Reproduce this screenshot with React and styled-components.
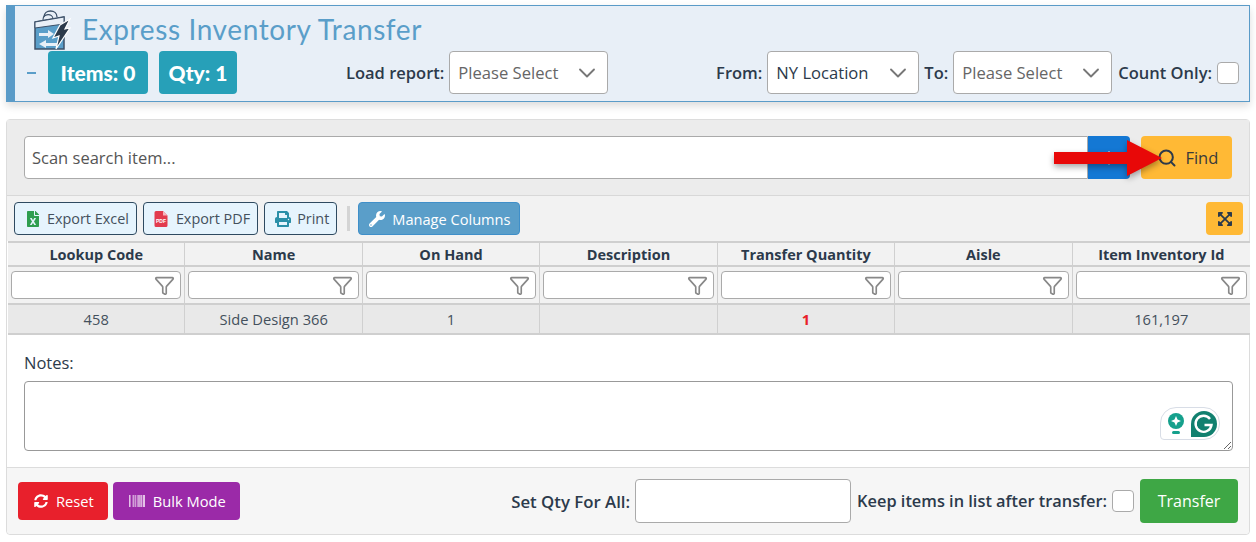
import React from 'react';
import styled, { createGlobalStyle } from 'styled-components';
import { FaFileExcel, FaPrint, FaWrench, FaSyncAlt, FaBarcode, FaExpandArrowsAlt } from 'react-icons/fa';
import { Search, ChevronDown, Filter, Plus } from 'lucide-react';

const Global = createGlobalStyle`
  html, body { margin: 0; padding: 0; background: #fff; }
  body { font-family: "Open Sans", "Liberation Sans", sans-serif; color: #2c3a4b; overflow: hidden; }
  * { box-sizing: border-box; }
`;

const Page = styled.div`
  width: 1256px;
  height: 542px;
  padding: 5px 6px 0;
  display: flex;
  flex-direction: column;
  gap: 17px;
`;

const Header = styled.header`
  height: 97px;
  background: #e8eff7;
  border: 1px solid #5a9bc8;
  border-left: 9px solid #5a9bc8;
  box-shadow: 0 4px 8px rgba(0, 0, 0, 0.14);
  padding: 4px 10px 0 8px;
`;

const TitleRow = styled.div`
  display: flex;
  align-items: center;
  gap: 3px;
  height: 39px;
  padding-left: 10px;
`;

const Title = styled.h1`
  margin: -2px 0 0;
  font-family: Lato, sans-serif;
  font-weight: 400;
  font-size: 28px;
  letter-spacing: 0.6px;
  color: #5a9ec9;
`;

const ControlRow = styled.div`
  display: flex;
  align-items: center;
  height: 43px;
  margin-top: 2px;
`;

const Dash = styled.span`
  width: 9px;
  height: 2px;
  background: #5a9ec9;
  margin: 0 12px 0 4px;
`;

const Badge = styled.div`
  width: ${(p) => p.$width}px;
  height: 43px;
  margin-right: 11px;
  display: flex;
  align-items: center;
  justify-content: center;
  background: #27a0b8;
  border-radius: 4px;
  color: #fff;
  font-family: Lato, sans-serif;
  font-weight: 900;
  font-size: 21px;
`;

const Label = styled.label`
  font-weight: 600;
  font-size: ${(p) => p.$size || 16.5}px;
  color: #2c3a4b;
  margin: ${(p) => p.$margin || '0 5px 0 0'};
  white-space: nowrap;
`;

const SelectBox = styled.div`
  width: ${(p) => p.$width}px;
  height: 43px;
  background: #fff;
  border: 1px solid #aaa;
  border-radius: 4px;
  display: flex;
  align-items: center;
  justify-content: space-between;
  padding: 0 6px 0 8px;
  font-size: 16.6px;
  color: ${(p) => (p.$placeholder ? '#666' : '#2c3a4b')};
  svg { color: #777; }
`;

const Check = styled.span`
  display: block;
  width: 22px;
  height: 22px;
  background: #fff;
  border: 1px solid #aaa;
  border-radius: 4px;
`;

const Panel = styled.section`
  height: 416px;
  border: 1px solid #dcdcdc;
  border-radius: 4px;
  display: flex;
  flex-direction: column;
`;

const SearchBar = styled.div`
  position: relative;
  height: 76px;
  background: #ececec;
  padding: 16px 17px;
  display: flex;
  border-bottom: 1px solid #d8d8d8;
`;

const SearchInput = styled.div`
  flex: 0 0 1064px;
  height: 43px;
  background: #fff;
  border: 1px solid #aaa;
  border-radius: 4px 0 0 4px;
  padding: 0 7px;
  display: flex;
  align-items: center;
  font-size: 16.5px;
  color: #555;
`;

const BlueButton = styled.div`
  width: 42px;
  height: 43px;
  background: #1478d4;
  border-radius: 0 4px 4px 0;
  margin-right: 11px;
  display: flex;
  align-items: center;
  justify-content: center;
  color: #fff;
`;

const FindButton = styled.div`
  width: 92px;
  height: 43px;
  padding-left: 3px;
  background: #ffb935;
  border-radius: 4px;
  display: flex;
  align-items: center;
  justify-content: center;
  gap: 8px;
  font-size: 16.5px;
  color: #3a3a3a;
`;

const ArrowMark = styled.svg`
  position: absolute;
  left: 1047px;
  top: 20px;
  filter: drop-shadow(0 3px 3px rgba(0, 0, 0, 0.35));
`;

const Toolbar = styled.div`
  height: 45px;
  background: #f2f2f2;
  display: flex;
  align-items: center;
  padding: 0 7px;
  gap: 6px;
`;

const ToolButton = styled.div`
  height: 33px;
  padding: 0 7px 0 10px;
  display: flex;
  align-items: center;
  gap: 6px;
  background: #e6f4fd;
  border: 1px solid #2f4a60;
  border-radius: 4px;
  font-size: 14.4px;
  color: #44505c;
`;

const Separator = styled.span`
  width: 3px;
  height: 25px;
  background: #d4d4d4;
  margin: 0 2px 0 4px;
`;

const ManageButton = styled(ToolButton)`
  background: #5a9ec9;
  border-color: #3f8fc9;
  color: #fff;
  gap: 7px;
  padding-right: 8px;
  font-size: 14.6px;
`;

const ExpandButton = styled.div`
  width: 37px;
  height: 33px;
  margin-left: auto;
  margin-right: -1px;
  background: #ffb935;
  border-radius: 4px;
  display: flex;
  align-items: center;
  justify-content: center;
  color: #2c3a4b;
`;

const Table = styled.div`
  display: grid;
  grid-template-columns: repeat(7, 1fr);
  margin: 0 -1px 0 1px;
  border-top: 2px solid #cfcfcf;
  border-bottom: 2px solid #cfcfcf;
`;

const HeadCell = styled.div`
  height: 24px;
  background: #f2f2f2;
  border-right: 1px solid #d0d0d0;
  border-bottom: 2px solid #cfcfcf;
  display: flex;
  align-items: center;
  justify-content: center;
  font-weight: 700;
  font-size: 14.5px;
  color: #2c3a4b;
  &:nth-child(7) { border-right: 0; }
`;

const FilterCell = styled.div`
  height: 38px;
  background: #f2f2f2;
  border-right: 1px solid #d0d0d0;
  border-bottom: 2px solid #cfcfcf;
  padding: 4px 3px 0;
  &:nth-child(14) { border-right: 0; }
`;

const FilterInput = styled.div`
  height: 28px;
  background: #fff;
  border: 1px solid #aaa;
  border-radius: 4px;
  display: flex;
  align-items: center;
  justify-content: flex-end;
  padding-right: 5px;
  color: #888;
`;

const DataCell = styled.div`
  height: 28px;
  background: #e9e9e9;
  border-right: 1px solid #d0d0d0;
  display: flex;
  align-items: center;
  justify-content: center;
  font-size: 14.7px;
  font-weight: ${(p) => (p.$alert ? 700 : 400)};
  color: ${(p) => (p.$alert ? '#e8202a' : '#44505c')};
  &:nth-child(21) { border-right: 0; }
`;

const Notes = styled.div`
  flex: 1;
  background: #fff;
  padding: 17px 17px 16px;
  border-bottom: 1px solid #dcdcdc;
`;

const NotesLabel = styled.div`
  font-size: 16.5px;
  font-weight: 500;
  line-height: 22px;
  margin-bottom: 7px;
`;

const NotesField = styled.div`
  position: relative;
  width: 1209px;
  height: 70px;
`;

const NotesArea = styled.textarea`
  display: block;
  width: 100%;
  height: 100%;
  border: 1px solid #999;
  border-radius: 4px;
  background: #fff;
  outline: none;
`;

const GrammarlyPill = styled.div`
  position: absolute;
  right: 13px;
  bottom: 11px;
  width: 60px;
  height: 33px;
  background: #fff;
  border: 1px solid #d8dde6;
  border-radius: 16px 16px 16px 4px;
  display: flex;
  align-items: center;
  gap: 6px;
  padding-left: 6px;
`;

const Footer = styled.footer`
  height: 66px;
  background: #f6f6f6;
  display: flex;
  align-items: center;
  padding: 0 11px;
  border-radius: 0 0 4px 4px;
`;

const ActionButton = styled.div`
  height: 38px;
  padding: 0 14px 0 16px;
  margin-right: 5px;
  display: flex;
  align-items: center;
  gap: 8px;
  background: ${(p) => p.$bg};
  border-radius: 4px;
  color: #fff;
  font-size: 14.7px;
`;

const QtyInput = styled.div`
  width: 216px;
  height: 44px;
  background: #fff;
  border: 1px solid #aaa;
  border-radius: 4px;
  margin-right: 6px;
`;

const TransferButton = styled.div`
  width: 98px;
  height: 44px;
  margin-left: 6px;
  background: #3ea745;
  border-radius: 4px;
  display: flex;
  align-items: center;
  justify-content: center;
  color: #fff;
  font-size: 16px;
`;

const columns = ['Lookup Code', 'Name', 'On Hand', 'Description', 'Transfer Quantity', 'Aisle', 'Item Inventory Id'];
const row = ['458', 'Side Design 366', '1', '', '1', '', '161,197'];

const Logo = () => (
  <svg width="46" height="40" viewBox="0 0 46 40">
    <path d="M11 7 C11 -1 24 -1 24 7" fill="none" stroke="#3c5068" strokeWidth="1.3" />
    <path d="M2 12 L31 7 L31 39 L2 39 Z" fill="#5a9ec9" stroke="#3c5068" strokeWidth="1.5" />
    <path d="M2 12 L31 7 L31 14 L2 18 Z" fill="#e8eff7" stroke="#3c5068" strokeWidth="1" />
    <path d="M10 10 C10 3 20 3 20 9" fill="none" stroke="#3c5068" strokeWidth="1.1" />
    <path d="M6 23 H15 V20 L21 24 L15 28 V26 H6 Z" fill="#e8eff7" />
    <path d="M24 33 H13 V30 L6 34 L13 38 V36 H24 Z" fill="#e8eff7" />
    <path d="M27 15 L37 9 L32 19 L37 18 L23 39 L26 26 L20 28 Z" fill="#2c3a4b" stroke="#fff" strokeWidth="1.2" />
  </svg>
);

const PdfIcon = () => (
  <svg width="14" height="16" viewBox="0 0 13 16" style={{ marginRight: 2 }}>
    <path d="M1.5 0 H8.5 L13 4.5 V14.5 A1.5 1.5 0 0 1 11.5 16 H1.5 A1.5 1.5 0 0 1 0 14.5 V1.5 A1.5 1.5 0 0 1 1.5 0 Z" fill="#e23b4e" />
    <path d="M8.5 0 V4.5 H13 Z" fill="#f6b6be" />
    <text x="6.5" y="11.5" fontSize="5" fontWeight="700" fontFamily="Liberation Sans" textAnchor="middle" fill="#fff">PDF</text>
  </svg>
);

const App = () => (
  <>
    <Global />
    <Page>
      <Header>
        <TitleRow>
          <Logo />
          <Title>Express Inventory Transfer</Title>
        </TitleRow>
        <ControlRow>
          <Dash />
          <Badge $width={100}>Items: 0</Badge>
          <Badge $width={78}>Qty: 1</Badge>
          <Label $margin="0 5px 0 98px">Load report:</Label>
          <SelectBox $width={159} $placeholder>Please Select <ChevronDown size={28} strokeWidth={1.6} /></SelectBox>
          <Label $margin="0 5px 0 auto">From:</Label>
          <SelectBox $width={152}>NY Location <ChevronDown size={28} strokeWidth={1.6} /></SelectBox>
          <Label $margin="0 5px 0 5px">To:</Label>
          <SelectBox $width={159} $placeholder>Please Select <ChevronDown size={28} strokeWidth={1.6} /></SelectBox>
          <Label $margin="0 5px 0 6px">Count Only:</Label>
          <Check />
        </ControlRow>
      </Header>
      <Panel>
        <SearchBar>
          <SearchInput>Scan search item...</SearchInput>
          <BlueButton><Plus size={20} /></BlueButton>
          <FindButton><Search size={20} color="#2c3a4b" strokeWidth={2.4} />Find</FindButton>
          <ArrowMark width="112" height="40" viewBox="0 0 112 40">
            <path d="M0 12 H73 V0 L108 18 L73 36 V24 H0 Z" fill="#e80808" />
          </ArrowMark>
        </SearchBar>
        <Toolbar>
          <ToolButton><FaFileExcel size={16} color="#2f9e4f" />Export Excel</ToolButton>
          <ToolButton><PdfIcon />Export PDF</ToolButton>
          <ToolButton><FaPrint size={16} color="#2a8fa8" />Print</ToolButton>
          <Separator />
          <ManageButton><FaWrench size={16} color="#fff" />Manage Columns</ManageButton>
          <ExpandButton><FaExpandArrowsAlt size={16} /></ExpandButton>
        </Toolbar>
        <Table>
          {columns.map((c) => <HeadCell key={c}>{c}</HeadCell>)}
          {columns.map((c) => (
            <FilterCell key={c}>
              <FilterInput><Filter size={21} strokeWidth={1.9} /></FilterInput>
            </FilterCell>
          ))}
          {row.map((v, i) => <DataCell key={i} $alert={i === 4}>{v}</DataCell>)}
        </Table>
        <Notes>
          <NotesLabel>Notes:</NotesLabel>
          <NotesField>
            <NotesArea />
            <GrammarlyPill>
              <svg width="18" height="24" viewBox="0 0 18 24">
                <circle cx="9" cy="9" r="8" fill="#15a08c" />
                <path d="M9 4 L10.5 7.5 L14 9 L10.5 10.5 L9 14 L7.5 10.5 L4 9 L7.5 7.5 Z" fill="#fff" />
                <rect x="5" y="19" width="8" height="3" rx="1.5" fill="#15a08c" />
              </svg>
              <svg width="26" height="26" viewBox="0 0 26 26">
                <path d="M13 0 A13 13 0 0 1 13 26 H0 V13 A13 13 0 0 1 13 0 Z" fill="#11806f" />
                <path d="M19 8 A8 8 0 1 0 20.5 14 H13.5" fill="none" stroke="#fff" strokeWidth="2.4" />
              </svg>
            </GrammarlyPill>
          </NotesField>
        </Notes>
        <Footer>
          <ActionButton $bg="#e8202c"><FaSyncAlt size={14} />Reset</ActionButton>
          <ActionButton $bg="#9b2aa8"><FaBarcode size={16} />Bulk Mode</ActionButton>
          <Label $margin="0 5px 0 auto" $size={16.8}>Set Qty For All:</Label>
          <QtyInput />
          <Label $margin="0 5px 0 0" $size={16.37}>Keep items in list after transfer:</Label>
          <Check />
          <TransferButton>Transfer</TransferButton>
        </Footer>
      </Panel>
    </Page>
  </>
);

export default App;
